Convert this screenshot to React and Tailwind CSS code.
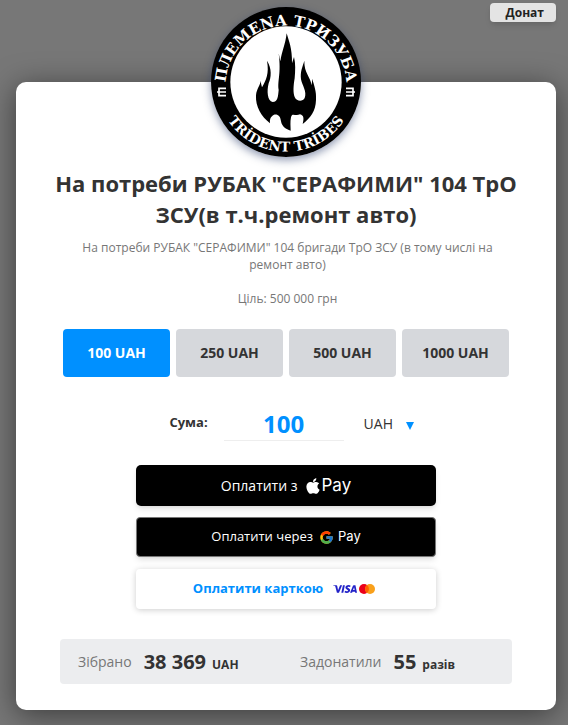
import { useState } from "react";
import { FaApple } from "react-icons/fa";
import { FcGoogle } from "react-icons/fc";
import { SiVisa } from "react-icons/si";

const AMOUNTS = [100, 250, 500, 1000];

function TribeMark() {
  return (
    <svg viewBox="33 21 450 450" className="block size-full" role="img" aria-label="Племена Тризуба">
      <defs>
        <path id="arcTop" d="M77 258 A181 181 0 1 1 439 258" />
        <path id="arcBottom" d="M49 246 A209 209 0 0 0 467 246" />
      </defs>
      <circle cx="258" cy="246" r="225" fill="#000" />
      <circle cx="258" cy="246" r="167" fill="#fff" />
      <path
        fill="#000"
        d="M260 100 C266 122 277 145 276 190 L282 171 C287 190 286 212 284 235 C280 258 279 278 284 291 C290 305 308 306 314 294 C322 275 306 256 303 238 C300 214 308 200 313 182 C312 220 332 230 335 256 L337 236 C342 258 350 272 348 300 C347 334 331 354 308 372 C312 356 312 346 300 343 C285 350 277 336 273 352 C270 366 272 380 272 392 C258 388 246 380 243 364 C241 348 234 342 222 344 C211 350 209 358 210 370 C184 350 166 320 168 286 C170 264 182 256 181 242 L186 262 C198 240 208 222 201 182 C216 206 214 232 206 250 C200 272 202 304 218 306 C234 306 234 288 236 270 C232 240 244 224 236 160 L241 184 C246 152 256 134 260 100 Z"
      />
      <g fill="#fff" className="font-['DejaVu_Serif',serif] font-bold">
        <text fontSize="45" textAnchor="middle">
          <textPath href="#arcTop" startOffset="50%">ПЛЕМЕNА ТРИЗУБА</textPath>
        </text>
        <text fontSize="41" textAnchor="middle">
          <textPath href="#arcBottom" startOffset="50%">TRİDENT TRİBES</textPath>
        </text>
      </g>
      <g fill="none" stroke="#fff" strokeWidth="5">
        <path d="M78 265 H57 V287 H78 M51 276 H78" />
        <path d="M438 265 H459 V287 H438 M465 276 H438" />
      </g>
    </svg>
  );
}

function AmountButton({ value, active, onClick }) {
  return (
    <button
      type="button"
      aria-pressed={active}
      onClick={onClick}
      className={`h-12 flex-1 rounded-sm text-sm font-bold ${active ? "bg-[#0090ff] text-white" : "bg-[#d6d8dc] text-[#333]"}`}
    >
      {value} UAH
    </button>
  );
}

function Stat({ label, value, unit }) {
  return (
    <p className="flex items-center whitespace-nowrap">
      <span className="text-sm text-[#777]">{label}</span>
      <span className="ml-3 flex items-baseline">
        <strong className="text-xl leading-7">{value}</strong>
        <strong className="ml-1.5 text-xs">{unit}</strong>
      </span>
    </p>
  );
}

export default function App() {
  const [amount, setAmount] = useState("100");

  return (
    <div className="min-h-screen bg-[#777] pr-3 pb-4 pl-4 font-['Open_Sans','Noto_Sans',sans-serif] text-[#333]">
      <header className="flex h-[82px] items-start justify-end pt-[3px]">
        <button
          type="button"
          className="h-[19px] rounded-sm bg-[#e4e4e4] pr-3 pl-4 text-xs leading-4 font-bold text-[#222] shadow-md"
        >
          Донат
        </button>
      </header>

      <main className="flow-root rounded-[10px] bg-white px-9 pb-[26px] shadow-[0_5px_30px_rgba(0,0,0,0.5)]">
        <div className="mx-auto -mt-[75px] size-[150px] rounded-full shadow-[0_3px_8px_rgba(30,50,100,0.5)]">
          <TribeMark />
        </div>

        <h1 className="mt-[11px] text-center text-[22px] leading-[31px] font-bold">
          На потреби РУБАК "СЕРАФИМИ" 104 ТрО ЗСУ(в т.ч.ремонт авто)
        </h1>
        <div className="mx-auto mt-[9px] max-w-[430px] pl-[3px] text-center text-xs leading-[17px] text-[#777]">
          <p>На потреби РУБАК "СЕРАФИМИ" 104 бригади ТрО ЗСУ (в тому числі на ремонт авто)</p>
          <p className="mt-[17px]">Ціль: 500 000 грн</p>
        </div>

        <div className="mx-auto mt-[22px] flex max-w-[446px] gap-1.5">
          {AMOUNTS.map((value) => (
            <AmountButton
              key={value}
              value={value}
              active={String(value) === amount}
              onClick={() => setAmount(String(value))}
            />
          ))}
        </div>

        <div className="mt-[30px] flex h-[34px] items-center justify-center pl-[11px]">
          <label htmlFor="sum" className="mr-4 pb-0.5 text-[13px] font-bold">
            Сума:
          </label>
          <input
            id="sum"
            value={amount}
            onChange={(event) => setAmount(event.target.value)}
            className="h-[34px] w-[120px] border-b border-[#eee] text-center text-2xl font-bold text-[#0090ff] outline-none"
          />
          <div className="relative ml-5 flex items-center">
            <select aria-label="Валюта" className="w-[50px] appearance-none bg-transparent text-sm leading-6">
              <option>UAH</option>
            </select>
            <svg viewBox="0 0 8 8" className="pointer-events-none absolute top-[10px] right-0 size-2 fill-[#0090ff]">
              <path d="M0 0 H8 L4 8 Z" />
            </svg>
          </div>
        </div>

        <div className="mx-auto mt-6 flex max-w-[300px] flex-col">
          <button
            type="button"
            className="flex h-[41px] items-center justify-center rounded-[5px] bg-black text-sm text-white shadow-md"
          >
            Оплатити з
            <FaApple className="ml-1.5 size-[18px]" />
            <span className="font-['Inter',sans-serif] text-[17px]">Pay</span>
          </button>
          <button
            type="button"
            className="mt-[11px] flex h-10 items-center justify-center rounded-sm border border-[#777] bg-black text-[13px] text-white shadow-md"
          >
            Оплатити через
            <FcGoogle className="mr-1 ml-1.5 size-[15px]" />
            <span className="font-['Inter',sans-serif] text-[13px]">Pay</span>
          </button>
          <button
            type="button"
            className="mt-3 flex h-10 items-center justify-center rounded-sm bg-white pr-1 text-[13px] font-bold text-[#0090ff] shadow-[0_1px_6px_rgba(0,0,0,0.2)]"
          >
            Оплатити карткою
            <SiVisa className="ml-2.5 size-6 text-[#2222c8]" />
            <svg viewBox="0 0 16 10" className="ml-0.5 h-[10px] w-4">
              <circle cx="5" cy="5" r="5" fill="#eb001b" />
              <circle cx="11" cy="5" r="5" fill="#f9a01b" />
              <path d="M8 1 A5 5 0 0 1 8 9 A5 5 0 0 1 8 1 Z" fill="#ff5f00" />
            </svg>
          </button>
        </div>

        <div className="mx-auto mt-[30px] grid h-[45px] max-w-[452px] grid-cols-[222px_1fr] items-center rounded-sm bg-[#ecedef] pl-[18px]">
          <Stat label="Зібрано" value="38 369" unit="UAH" />
          <Stat label="Задонатили" value="55" unit="разів" />
        </div>
      </main>
    </div>
  );
}
